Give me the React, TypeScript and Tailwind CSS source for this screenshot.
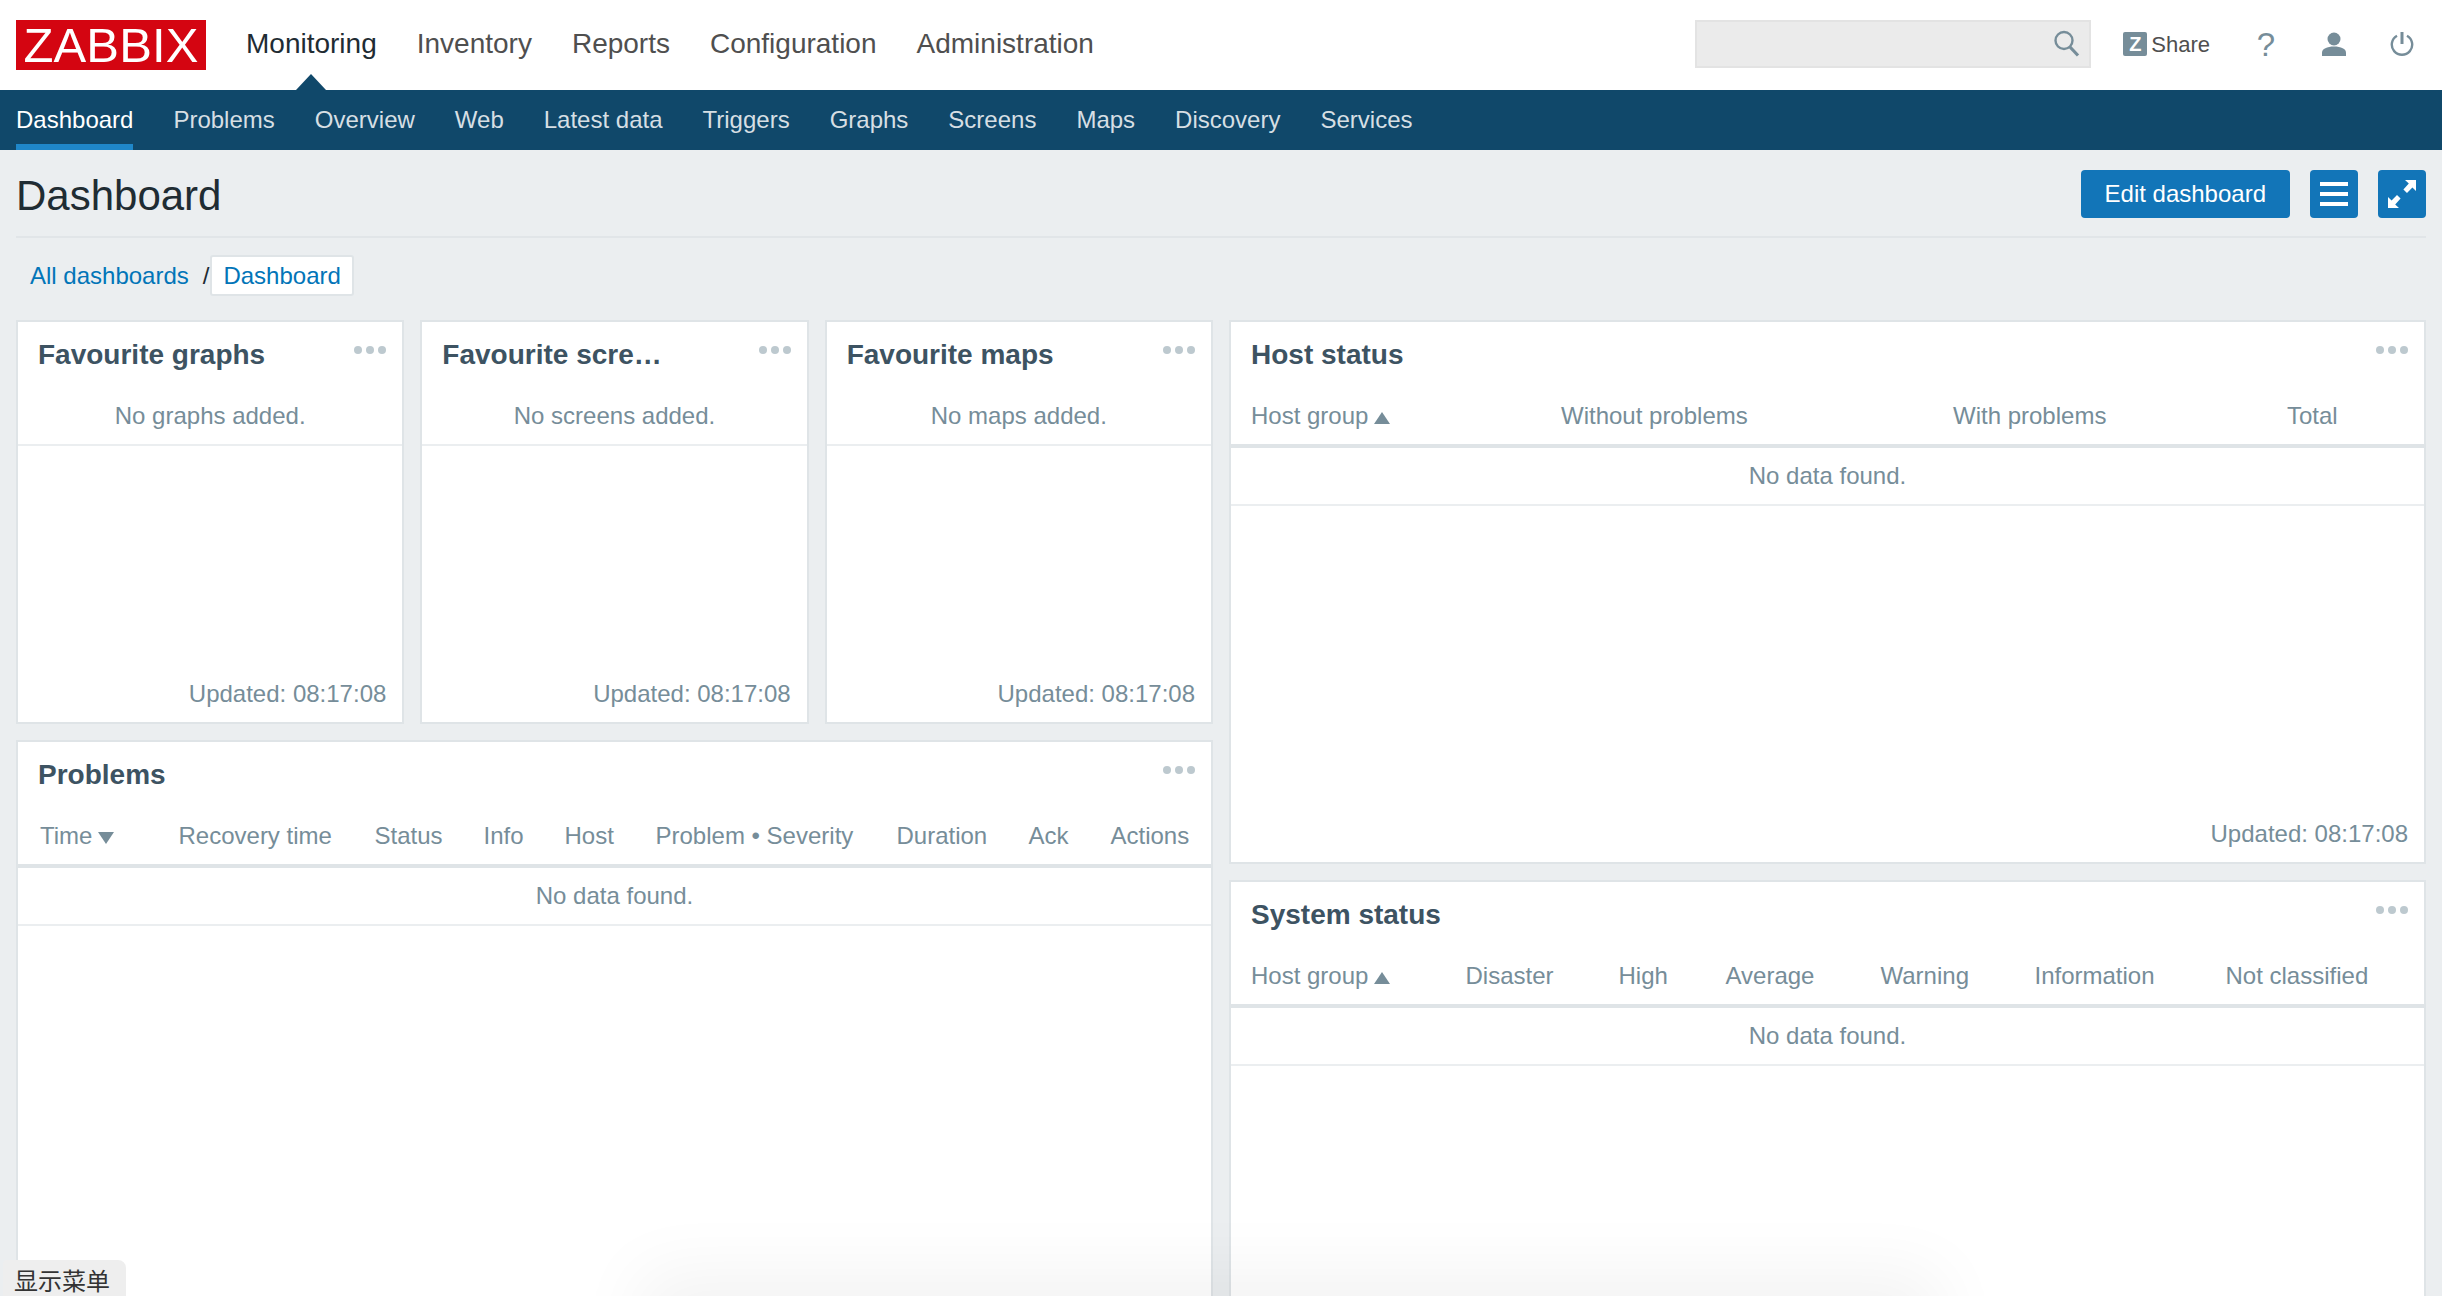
import React from "react";

const muted = "text-[#768d99]";

function Dots() {
  return (
    <div className="absolute right-4 top-6 flex gap-1">
      <span className="w-2 h-2 rounded-full bg-[#bdc9cf]" />
      <span className="w-2 h-2 rounded-full bg-[#bdc9cf]" />
      <span className="w-2 h-2 rounded-full bg-[#bdc9cf]" />
    </div>
  );
}

function Widget({ title, className, children }: { title: string; className?: string; children?: React.ReactNode }) {
  return (
    <section className={`relative flex flex-col bg-white border-2 border-[#dfe4e7] ${className ?? ""}`}>
      <h4 className="h-[66px] shrink-0 pl-5 pt-[14px] text-[28px] leading-[38px] font-bold text-[#3d5362]">{title}</h4>
      <Dots />
      {children}
    </section>
  );
}

function Updated() {
  return (
    <div className={`mt-auto h-[58px] shrink-0 pr-4 pt-[1px] flex items-center justify-end text-[24px] ${muted}`}>
      Updated: 08:17:08
    </div>
  );
}

function EmptyRow({ text }: { text: string }) {
  return (
    <div className={`h-[58px] shrink-0 flex items-center justify-center border-b-2 border-[#ebeef0] text-[24px] ${muted}`}>
      {text}
    </div>
  );
}

function Arrow({ up }: { up?: boolean }) {
  return (
    <svg width="16" height="12" viewBox="0 0 16 12" className="ml-[6px] mt-[3px]" fill="#768d99">
      <polygon points={up ? "8,0 16,12 0,12" : "0,0 16,0 8,12"} />
    </svg>
  );
}

function HeadRow({ cols, pl }: { cols: { t: string; w?: string; arrow?: "up" | "down" }[]; pl: string }) {
  return (
    <div className={`h-[60px] shrink-0 flex items-center border-b-4 border-[#dfe4e7] text-[24px] whitespace-nowrap ${muted} ${pl}`}>
      {cols.map((c) => (
        <div key={c.t} className={`flex items-center shrink-0 ${c.w ?? ""}`}>
          {c.t}
          {c.arrow && <Arrow up={c.arrow === "up"} />}
        </div>
      ))}
    </div>
  );
}

function Favourite({ title, empty }: { title: string; empty: string }) {
  return (
    <Widget title={title} className="h-[404px]">
      <EmptyRow text={empty} />
      <Updated />
    </Widget>
  );
}

export default function App() {
  const main = ["Monitoring", "Inventory", "Reports", "Configuration", "Administration"];
  const sub = ["Dashboard", "Problems", "Overview", "Web", "Latest data", "Triggers", "Graphs", "Screens", "Maps", "Discovery", "Services"];
  return (
    <div className="relative h-screen overflow-hidden bg-[#ebeef0] font-['Liberation_Sans','Noto_Sans_CJK_SC',sans-serif]">
      <header className="h-[90px] bg-white flex items-start pl-4 pr-7">
        <div className="mt-5 w-[190px] h-[50px] bg-[#d40511] flex items-center justify-center text-white text-[49px] leading-none tracking-[0.1px]">
          ZABBIX
        </div>
        <nav className="ml-[40px] flex gap-10 h-[90px] items-center pb-[2px] text-[28px]">
          {main.map((m, i) => (
            <a key={m} className={`relative ${i === 0 ? "text-[#1f2c33]" : "text-[#4f4f4f]"}`}>
              {m}
              {i === 0 && (
                <svg width="30" height="16" viewBox="0 0 30 16" className="absolute left-[50px] top-[51px]">
                  <polygon points="15,0 30,16 0,16" fill="#10486a" />
                </svg>
              )}
            </a>
          ))}
        </nav>
        <div className="ml-auto flex items-center h-[90px] pb-[2px]">
          <div className="relative w-[396px] h-[48px] mt-[-1px] bg-[#ebebeb] border-2 border-[#e3e3e3]">
            <svg width="28" height="28" viewBox="0 0 28 28" className="absolute right-[8px] top-[8px]" fill="none" stroke="#768d99">
              <circle cx="11" cy="10.5" r="8.5" strokeWidth="2.4" />
              <path d="M17 17l8 8.5" strokeWidth="3.2" />
            </svg>
          </div>
          <div className="ml-8 w-6 h-6 rounded-[2px] bg-[#768d99] text-white text-[20px] font-bold leading-6 text-center">Z</div>
          <span className="ml-1 text-[22px] text-[#4f4f4f]">Share</span>
          <span className="ml-[49px] w-[14px] text-[33px] leading-none text-[#768d99] flex justify-center">?</span>
          <svg width="24" height="24" viewBox="0 0 24 24" className="ml-[49px]" fill="#768d99">
            <circle cx="12" cy="7" r="6.5" />
            <path d="M0 24v-3.5C0 17 5 14.5 12 14.5S24 17 24 20.5V24z" />
          </svg>
          <svg width="24" height="24" viewBox="0 0 24 24" className="ml-11" fill="none" stroke="#768d99" strokeWidth="2.4">
            <path d="M7 3.7A10.2 10.2 0 1 0 17 3.7" />
            <path d="M12 0v12" strokeWidth="3" />
          </svg>
        </div>
      </header>

      <nav className="h-[60px] bg-[#10486a] flex pl-4 gap-10 text-[24px] text-[#d6dfe4]">
        {sub.map((s, i) => (
          <a key={s} className={`h-full flex items-center ${i === 0 ? "text-white border-b-[6px] border-[#1f87c9] pt-[6px]" : ""}`}>
            {s}
          </a>
        ))}
      </nav>

      <main className="px-4">
        <div className="flex items-start justify-between pt-5 pb-[18px] border-b-2 border-[#e1e5e8]">
          <h1 className="mt-[3px] text-[42px] leading-[45px] text-[#1f2c33]">Dashboard</h1>
          <div className="flex items-center">
            <button className="h-12 px-6 rounded bg-[#1275b8] text-white text-[24px]">Edit dashboard</button>
            <button className="ml-5 w-12 h-12 rounded bg-[#1275b8] flex flex-col items-center justify-center gap-[6px]">
              <span className="w-7 h-1 bg-white" />
              <span className="w-7 h-1 bg-white" />
              <span className="w-7 h-1 bg-white" />
            </button>
            <button className="ml-5 w-12 h-12 rounded bg-[#1275b8] flex items-center justify-center">
              <svg width="28" height="28" viewBox="0 0 28 28" fill="white">
                <path d="M17 0h11v11l-3.6-3.6L19 13l-3.6-3.6 5.4-5.8z" />
                <path d="M11 28H0V17l3.6 3.6L9 15l3.6 3.6-5.4 5.8z" />
              </svg>
            </button>
          </div>
        </div>

        <div className="mt-[17px] mb-[24px] h-[41px] flex items-center text-[24px] text-[#0275b8]">
          <a className="ml-[14px]">All dashboards</a>
          <span className="ml-[14px] mr-[1px] text-[#1f2c33]">/</span>
          <a className="h-full px-[11px] flex items-center bg-white border-2 border-[#dfe4e7] rounded-[3px]">Dashboard</a>
        </div>

        <div className="grid grid-cols-2 gap-x-4">
          <div className="flex flex-col gap-4">
            <div className="grid grid-cols-3 gap-4">
              <Favourite title="Favourite graphs" empty="No graphs added." />
              <Favourite title="Favourite scre…" empty="No screens added." />
              <Favourite title="Favourite maps" empty="No maps added." />
            </div>
            <Widget title="Problems" className="h-[800px]">
              <HeadRow
                pl="pl-[22px]"
                cols={[
                  { t: "Time", w: "w-[138.5px]", arrow: "down" },
                  { t: "Recovery time", w: "w-[196px]" },
                  { t: "Status", w: "w-[109px]" },
                  { t: "Info", w: "w-[81px]" },
                  { t: "Host", w: "w-[91px]" },
                  { t: "Problem • Severity", w: "w-[241px]" },
                  { t: "Duration", w: "w-[132px]" },
                  { t: "Ack", w: "w-[82px]" },
                  { t: "Actions" },
                ]}
              />
              <EmptyRow text="No data found." />
            </Widget>
          </div>
          <div className="flex flex-col gap-4">
            <Widget title="Host status" className="h-[544px]">
              <HeadRow
                pl="pl-5"
                cols={[
                  { t: "Host group", w: "w-[310px]", arrow: "up" },
                  { t: "Without problems", w: "w-[392px]" },
                  { t: "With problems", w: "w-[334px]" },
                  { t: "Total" },
                ]}
              />
              <EmptyRow text="No data found." />
              <Updated />
            </Widget>
            <Widget title="System status" className="h-[800px]">
              <HeadRow
                pl="pl-5"
                cols={[
                  { t: "Host group", w: "w-[214.5px]", arrow: "up" },
                  { t: "Disaster", w: "w-[153px]" },
                  { t: "High", w: "w-[107px]" },
                  { t: "Average", w: "w-[155px]" },
                  { t: "Warning", w: "w-[154px]" },
                  { t: "Information", w: "w-[191px]" },
                  { t: "Not classified" },
                ]}
              />
              <EmptyRow text="No data found." />
            </Widget>
          </div>
        </div>
      </main>

      <div className="absolute left-[680px] top-[1312px] w-[1220px] h-[40px] bg-[#e8e8e8] shadow-[0_0_70px_40px_rgba(0,0,0,0.05)] pointer-events-none" />

      <div className="absolute left-[3px] bottom-0 w-[123px] h-9 rounded-tr-lg rounded-tl-sm bg-[#eeeeee] text-[#333333] text-[24px] leading-[44px] pl-[11px]">
        显示菜单
      </div>
    </div>
  );
}
